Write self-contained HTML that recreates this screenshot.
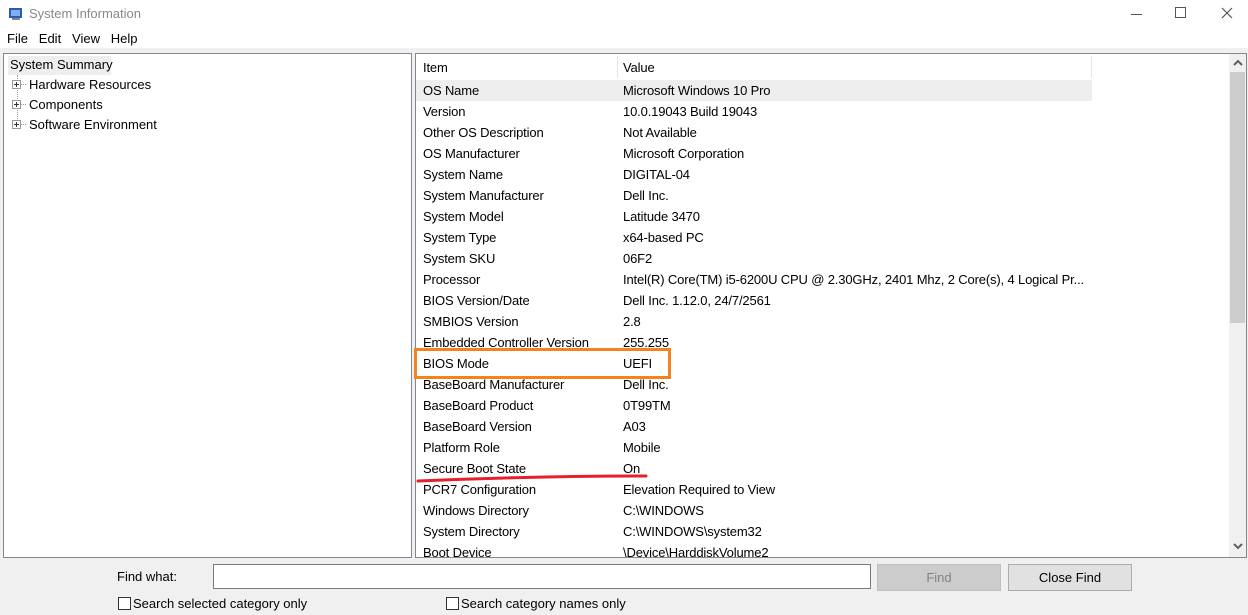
<!DOCTYPE html>
<html><head><meta charset="utf-8"><style>
*{margin:0;padding:0;box-sizing:border-box}
body{width:1248px;height:615px;background:#f0f0f0;font-family:"Liberation Sans",sans-serif;font-size:13px;color:#000;position:relative;overflow:hidden}
.abs{position:absolute}
.title{left:0;top:0;width:1248px;height:48px;background:#fff}
.row{position:absolute;left:0;height:21px;line-height:21px;white-space:nowrap;letter-spacing:-0.15px}
.row span{position:absolute}
</style></head><body>
<div class="abs title"></div>
<svg class="abs" style="left:8px;top:6px" width="16" height="16"><rect x="1" y="2" width="13" height="10" fill="#2a5db0"/><rect x="3" y="4" width="9" height="6" fill="#7fb0f0"/><rect x="4" y="12" width="8" height="2" fill="#888"/></svg>
<div class="abs" style="left:29px;top:6px;color:#888;font-size:13px">System Information</div>
<div class="abs" style="left:1131px;top:14px;width:11px;height:1px;background:#555"></div>
<div class="abs" style="left:1175px;top:7px;width:11px;height:11px;border:1px solid #555"></div>
<svg class="abs" style="left:1221px;top:7px" width="12" height="12"><path d="M1 1l10 10M11 1L1 11" stroke="#555" stroke-width="1.2"/></svg>
<div class="abs" style="left:7px;top:31px">File&nbsp;&nbsp;&nbsp;Edit&nbsp;&nbsp;&nbsp;View&nbsp;&nbsp;&nbsp;Help</div>

<div class="abs" style="left:3px;top:53px;width:409px;height:505px;background:#fff;border:1px solid #828790"></div>
<div class="abs" style="left:8px;top:56px;width:103px;height:19px;background:#eee"></div>
<div class="abs" style="left:10px;top:57px">System Summary</div>
<div class="abs" style="left:17px;top:75px;height:52px;border-left:1px dotted #999"></div>
<div class="abs" style="left:29px;top:77px">Hardware Resources</div>
<div class="abs" style="left:29px;top:97px">Components</div>
<div class="abs" style="left:29px;top:117px">Software Environment</div>
<svg class="abs" style="left:12px;top:80px" width="18" height="50">
<g fill="#fff" stroke="#999"><rect x="0.5" y="0.5" width="8" height="8"/><rect x="0.5" y="20.5" width="8" height="8"/><rect x="0.5" y="40.5" width="8" height="8"/></g>
<g stroke="#333"><path d="M2 4.5h5M4.5 2v5M2 24.5h5M4.5 22v5M2 44.5h5M4.5 42v5"/></g>
<g stroke="#999" stroke-dasharray="1 1"><path d="M9 4.5h6M9 24.5h6M9 44.5h6"/></g></svg>

<div class="abs" style="left:415px;top:53px;width:832px;height:505px;background:#fff;border:1px solid #828790;overflow:hidden">
<div class="abs" style="left:201px;top:2px;width:1px;height:22px;background:#e5e5e5"></div>
<div class="abs" style="left:675px;top:2px;width:1px;height:22px;background:#e5e5e5"></div>
<div class="abs" style="left:0;top:26px;width:676px;height:21px;background:#eee"></div>
<div id="rows"></div>
<div class="abs" style="left:813px;top:0;width:17px;height:503px;background:#f0f0f0"></div>
<div class="abs" style="left:814px;top:18px;width:15px;height:251px;background:#cdcdcd"></div>
<svg class="abs" style="left:816px;top:5px" width="12" height="8"><path d="M2 6l4-4 4 4" fill="none" stroke="#606060" stroke-width="2"/></svg>
<svg class="abs" style="left:816px;top:488px" width="12" height="8"><path d="M2 2l4 4 4-4" fill="none" stroke="#606060" stroke-width="2"/></svg>
</div>
<div class="abs" style="left:414px;top:348px;width:257px;height:31px;border:3px solid #f58220"></div>
<svg class="abs" style="left:414px;top:468px" width="240" height="16"><path d="M4 13 Q 120 8 232 8" fill="none" stroke="#e5202a" stroke-width="3" stroke-linecap="round"/></svg>

<div class="abs" style="left:117px;top:569px">Find what:</div>
<div class="abs" style="left:213px;top:564px;width:658px;height:25px;background:#fff;border:1px solid #7a7a7a"></div>
<div class="abs" style="left:877px;top:564px;width:124px;height:27px;background:#cccccc;border:1px solid #bfbfbf;color:#838383;text-align:center;line-height:25px">Find</div>
<div class="abs" style="left:1008px;top:564px;width:124px;height:27px;background:#e1e1e1;border:1px solid #adadad;text-align:center;line-height:25px">Close Find</div>
<div class="abs" style="left:118px;top:597px;width:13px;height:13px;border:1px solid #333;background:#fff"></div>
<div class="abs" style="left:133px;top:596px">Search selected category only</div>
<div class="abs" style="left:446px;top:597px;width:13px;height:13px;border:1px solid #333;background:#fff"></div>
<div class="abs" style="left:461px;top:596px">Search category names only</div>
<script>
var d=[["Item","Value"],["OS Name","Microsoft Windows 10 Pro"],["Version","10.0.19043 Build 19043"],["Other OS Description","Not Available"],["OS Manufacturer","Microsoft Corporation"],["System Name","DIGITAL-04"],["System Manufacturer","Dell Inc."],["System Model","Latitude 3470"],["System Type","x64-based PC"],["System SKU","06F2"],["Processor","Intel(R) Core(TM) i5-6200U CPU @ 2.30GHz, 2401 Mhz, 2 Core(s), 4 Logical Pr..."],["BIOS Version/Date","Dell Inc. 1.12.0, 24/7/2561"],["SMBIOS Version","2.8"],["Embedded Controller Version","255.255"],["BIOS Mode","UEFI"],["BaseBoard Manufacturer","Dell Inc."],["BaseBoard Product","0T99TM"],["BaseBoard Version","A03"],["Platform Role","Mobile"],["Secure Boot State","On"],["PCR7 Configuration","Elevation Required to View"],["Windows Directory","C:\\WINDOWS"],["System Directory","C:\\WINDOWS\\system32"],["Boot Device","\\Device\\HarddiskVolume2"]];
var h="";d.forEach(function(r,i){var t=i==0?3:26+(i-1)*21;h+='<div class="row" style="top:'+t+'px"><span style="left:7px">'+r[0]+'</span><span style="left:207px">'+r[1]+'</span></div>';});
document.getElementById("rows").innerHTML=h;
</script>
</body></html>
